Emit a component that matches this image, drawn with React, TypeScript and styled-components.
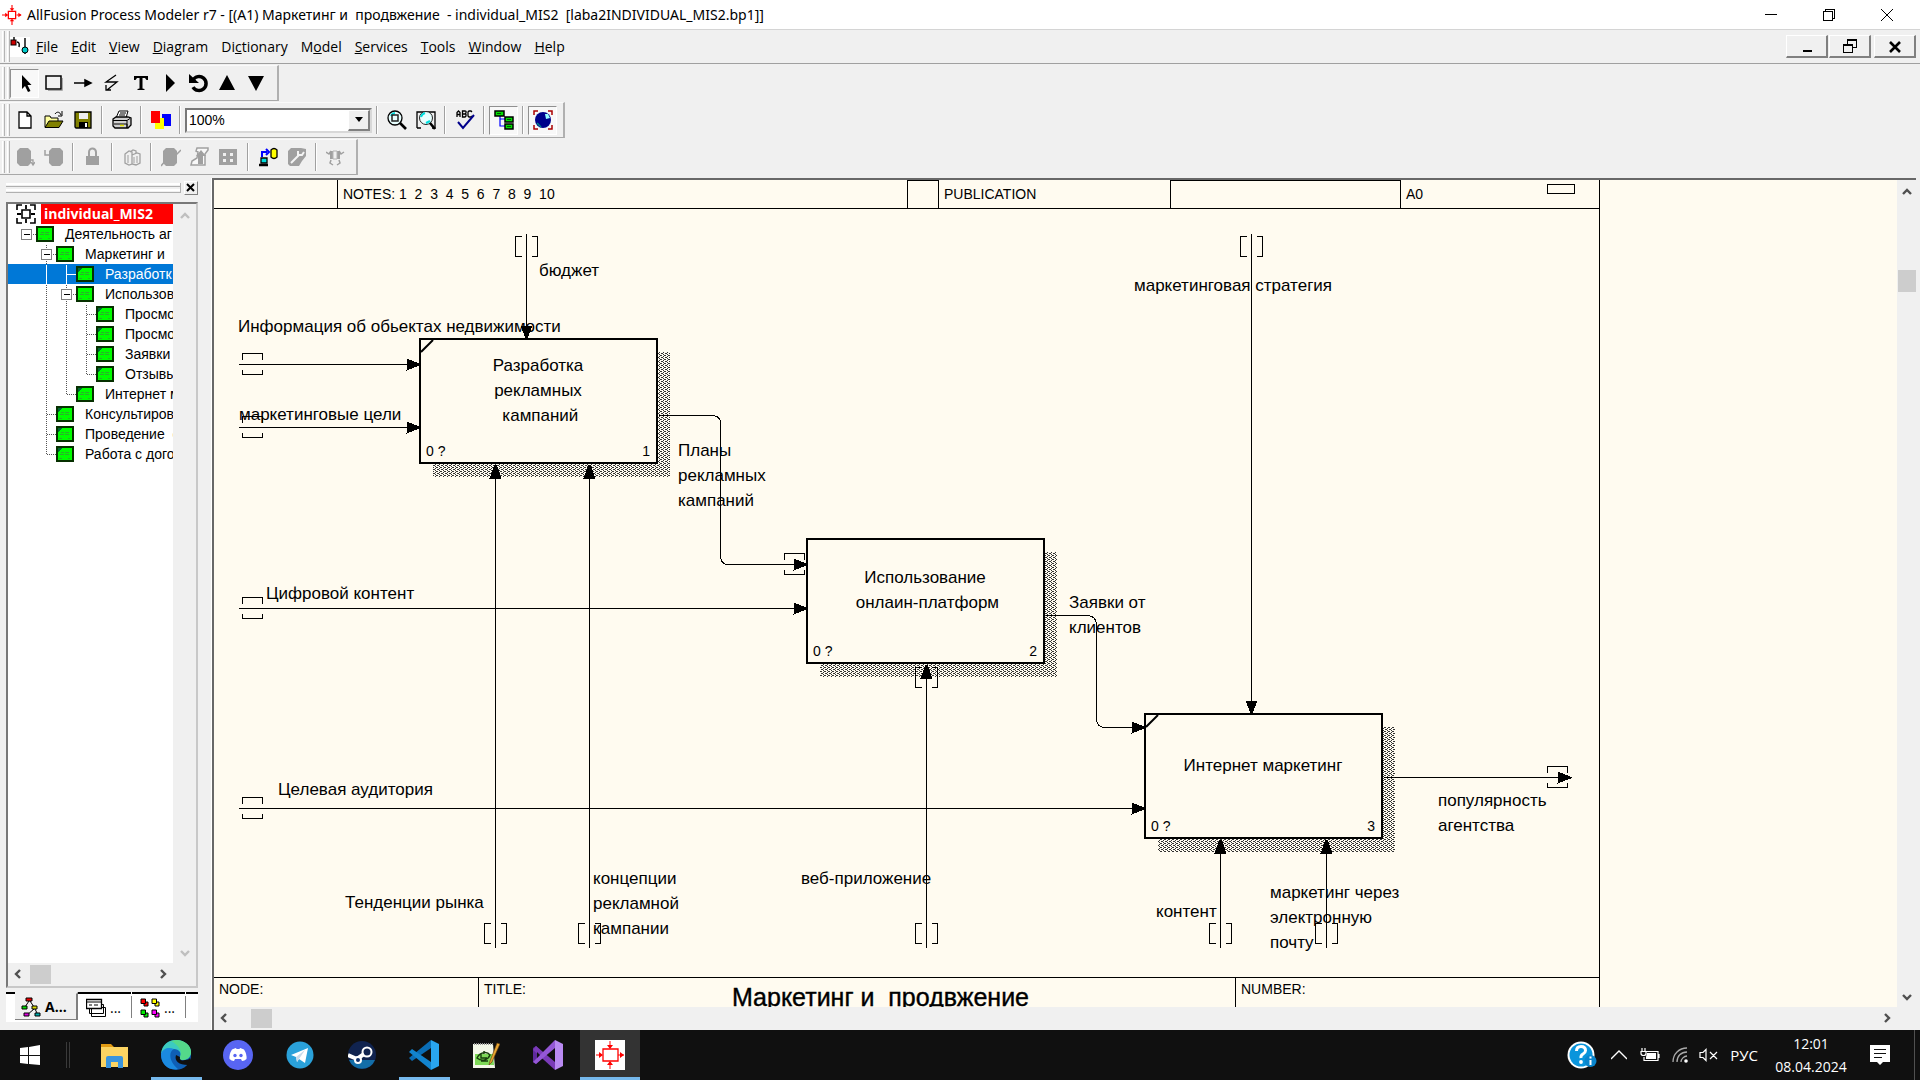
import React from "react";
import styled, { createGlobalStyle, css } from "styled-components";

const ui = `"Open Sans", "Noto Sans", sans-serif`;
const arial = `"Liberation Sans", Arial, sans-serif`;
const face = "#f0f0f0";
const paper = "#fffbf0";

const GlobalStyle = createGlobalStyle`
  *, *::before, *::after { box-sizing: border-box; }
  body { margin: 0; overflow: hidden; background: ${face}; color: #000; }
  button, select { font: inherit; color: inherit; margin: 0; padding: 0; border: 0; background: none; border-radius: 0; }
  svg { display: block; flex: none; }
`;

const Screen = styled.div`
  display: flex;
  flex-direction: column;
  height: 100vh;
  font: 14px/20px ${ui};
  background: ${face};
`;

/* ---------- title bar and menu ---------- */

const TitleBar = styled.header`
  display: flex;
  align-items: center;
  height: 29px;
  padding: 0 4px 0 2px;
  background: #fff;
`;

const Caption = styled.h1`
  flex: 1;
  margin: 0 0 0 5px;
  font: 400 14px/28px "Noto Sans", sans-serif;
  white-space: pre;
`;

const CaptionButton = styled.button`
  display: grid;
  place-items: center;
  width: 58px;
  height: 28px;
`;

const MenuBar = styled.nav`
  display: flex;
  align-items: center;
  height: 35px;
  padding: 0 4px 0 2px;
  border-top: 1px solid #d4d4d4;
  border-bottom: 1px solid #a0a0a0;
`;

const Grip = styled.span`
  flex: none;
  align-self: stretch;
  width: 8px;
  margin: 1px 0 1px;
  border: solid #b4b4b4;
  border-width: 0 1px 0 0;
  background: linear-gradient(90deg, #fff 0 1px, ${face} 1px 2px, #b4b4b4 2px 3px, ${face} 3px 5px, #fff 5px 6px, ${face} 6px);
`;

const MenuList = styled.div`
  display: flex;
  flex: 1;
  gap: 13px;
  margin-left: 6px;
`;

const MenuButton = styled.button`
  font: 14px/20px ${ui};
  white-space: nowrap;
`;

const MdiButton = styled.button<{ $gap?: boolean }>`
  display: grid;
  place-items: center;
  width: 42px;
  height: 23px;
  margin-left: ${(p) => (p.$gap ? 3 : 1)}px;
  border: solid;
  border-width: 1px 2px 2px 1px;
  border-color: #fff #808080 #808080 #fff;
`;

/* ---------- toolbars ---------- */

const Bars = styled.div`
  display: flex;
  flex-direction: column;
  align-items: flex-start;
  gap: 1px;
  padding-top: 1px;
`;

const Bar = styled.div`
  display: flex;
  align-items: center;
  height: 36px;
  padding: 0 6px 0 2px;
  border: solid;
  border-width: 1px 2px 1px 0;
  border-color: #fafafa #b0b0b0 #a8a8a8 #fafafa;
`;

const ToolButton = styled.button<{ $on?: boolean }>`
  display: grid;
  place-items: center;
  width: 29px;
  height: 29px;
  ${(p) =>
    p.$on &&
    css`
      background: #f8f8f8;
      border: 1px solid;
      border-color: #909090 #fff #fff #909090;
    `}
`;

const Divider = styled.span`
  flex: none;
  width: 2px;
  height: 28px;
  margin: 0 4px;
  border-left: 1px solid #a0a0a0;
  border-right: 1px solid #fff;
`;

const Combo = styled.label`
  display: grid;
  grid-template-columns: 1fr 22px;
  width: 187px;
  height: 25px;
  border: 2px solid;
  border-color: #787878 #d8d8d8 #d8d8d8 #787878;
  background: #fff;
`;

const ComboSelect = styled.select`
  grid-area: 1 / 1 / 2 / 3;
  appearance: none;
  width: 100%;
  padding-left: 2px;
  font: 14px/20px ${arial};
  outline: 0;
`;

const ComboArrow = styled.span`
  grid-area: 1 / 2;
  display: grid;
  place-items: center;
  pointer-events: none;
  background: ${face};
  border: solid;
  border-width: 1px 2px 2px 1px;
  border-color: #fff #808080 #808080 #fff;
`;

/* ---------- workspace ---------- */

const Workspace = styled.main`
  display: flex;
  flex: 1;
  min-height: 0;
  padding-top: 3px;
`;

const Explorer = styled.aside`
  display: flex;
  flex-direction: column;
  flex: none;
  width: 212px;
  padding: 2px 13px 8px 6px;
  border-right: 1px solid #fff;
  font: 14px/20px ${arial};
`;

const ExplorerHead = styled.div`
  display: flex;
  align-items: center;
  gap: 3px;
  height: 16px;
  margin-bottom: 6px;
`;

const Stripes = styled.span`
  flex: 1;
  height: 10px;
  border: solid #b0b0b0;
  border-width: 0 1px 1px 0;
  background: linear-gradient(#fff 0 2px, ${face} 2px 3px, #b0b0b0 3px 4px, ${face} 4px 6px, #fff 6px 8px, ${face} 8px);
`;

const CloseButton = styled.button`
  display: grid;
  place-items: center;
  width: 14px;
  height: 14px;
  border: 1px solid;
  border-color: #fff #808080 #808080 #fff;
`;

const TreeFrame = styled.div`
  display: grid;
  grid-template: 1fr 23px / 1fr 23px;
  flex: 1;
  min-height: 0;
  border: 2px solid;
  border-color: #787878 #c8c8c8 #c8c8c8 #787878;
`;

const TreeList = styled.ul`
  margin: 0;
  padding: 0;
  list-style: none;
  overflow: hidden;
  background: #fff;
`;

const TreeRow = styled.li<{ $selected?: boolean }>`
  display: flex;
  align-items: center;
  height: 20px;
  padding-left: 8px;
  white-space: pre;
  color: ${(p) => (p.$selected ? "#fff" : "#000")};
  background: ${(p) => (p.$selected ? "#0078d7" : "none")};
`;

const TreeName = styled.span`
  margin-left: 11px;
`;

const RootName = styled.strong`
  flex: 1;
  margin-left: 5px;
  padding-left: 3px;
  color: #fff;
  background: #f00;
  font: 700 14px/20px ${ui};
`;

const ScrollV = styled.div`
  display: flex;
  flex-direction: column;
  align-items: center;
  justify-content: space-between;
  padding: 6px 0 4px;
  background: ${face};
`;

const ScrollH = styled.div`
  display: flex;
  align-items: center;
  height: 22px;
  padding: 0 4px;
  background: ${face};
`;

const ScrollButton = styled.button`
  display: grid;
  place-items: center;
  width: 12px;
  height: 12px;
`;

const Thumb = styled.span<{ $v?: boolean; $offset: number }>`
  flex: none;
  width: ${(p) => (p.$v ? 18 : 21)}px;
  height: ${(p) => (p.$v ? 22 : 19)}px;
  margin: ${(p) => (p.$v ? `${p.$offset}px 0 auto` : `0 auto 0 ${p.$offset}px`)};
  background: #cdcdcd;
`;

const Tabs = styled.div`
  display: flex;
  height: 30px;
  margin-top: 4px;
  background: #fff;
`;

const Tab = styled.button<{ $active?: boolean }>`
  display: flex;
  align-items: center;
  gap: 4px;
  width: ${(p) => (p.$active ? 63 : 53)}px;
  padding-left: ${(p) => (p.$active ? 6 : 8)}px;
  border-top: 2px solid #000;
  font: ${(p) => (p.$active ? 700 : 400)} 14px/20px ${ui};
  ${(p) =>
    p.$active &&
    css`
      height: 28px;
      background: ${face};
      border-top-color: ${face};
      border-right: 2px solid #808080;
      border-bottom: 1px solid #808080;
    `}
`;

const TabLead = styled.span<{ $fill?: boolean }>`
  flex: ${(p) => (p.$fill ? 1 : "none")};
  width: 9px;
  border-top: 2px solid #000;
`;

const TabRule = styled.span`
  width: 1px;
  height: 22px;
  align-self: center;
  background: #808080;
`;

const Document = styled.section`
  display: grid;
  grid-template: 1fr 23px / 1fr 19px;
  flex: 1;
  min-width: 0;
  margin-right: 4px;
  border: solid #686868;
  border-width: 2px 0 0 2px;
`;

const Viewport = styled.div`
  overflow: hidden;
  background: ${paper};
  font: 17px/25px ${arial};
`;

const Sheet = styled.div`
  width: 1386px;
  border-right: 1px solid #000;
`;

const SheetRow = styled.div<{ $footer?: boolean }>`
  display: flex;
  height: ${(p) => (p.$footer ? 46 : 29)}px;
  border: solid #000;
  border-width: ${(p) => (p.$footer ? "1px 0 0" : "0 0 1px")};
  font: 14px/${(p) => (p.$footer ? 22 : 29)}px ${arial};
`;

const Cell = styled.div<{ $w?: number; $top?: boolean }>`
  display: flex;
  flex: ${(p) => (p.$w ? "none" : 1)};
  width: ${(p) => p.$w}px;
  padding-left: 5px;
  border-right: ${(p) => (p.$w ? "1px solid #000" : "0")};
  border-top: ${(p) => (p.$top ? "1px solid #000" : "0")};
  white-space: pre;
`;

const ContextBox = styled.span`
  width: 28px;
  height: 10px;
  margin: 4px 24px 0 auto;
  border: 1px solid #000;
`;

const SheetTitle = styled.h2`
  flex: 1;
  margin: 0;
  font: 400 25px/38px ${arial};
  text-align: center;
  -webkit-text-stroke: 0.4px #000;
`;

const Stage = styled.div`
  position: relative;
  height: 768px;
`;

const Lines = styled.svg`
  width: 100%;
  height: 100%;
`;

const Activity = styled.div`
  position: absolute;
  display: flex;
  flex-direction: column;
  width: 239px;
  height: 126px;
  padding: 0 6px 0 5px;
  border: 2px solid #000;
  background: ${paper};
`;

const Corner = styled.svg`
  position: absolute;
  top: 0;
  left: 0;
`;

const ActivityName = styled.div`
  display: grid;
  flex: 1;
  place-content: center;
  text-align: center;
  white-space: pre;
`;

const ActivityFoot = styled.div`
  display: flex;
  justify-content: space-between;
  font: 14px/22px ${arial};
`;

const ArrowLabel = styled.div`
  position: absolute;
  white-space: pre;
`;

/* ---------- taskbar ---------- */

const Taskbar = styled.footer`
  display: flex;
  align-items: stretch;
  flex: none;
  height: 50px;
  background: #101010;
  color: #fff;
`;

const TaskButton = styled.button<{ $state?: "running" | "active" }>`
  display: grid;
  place-items: center;
  width: 60px;
  margin-right: 2px;
  background-color: ${(p) => (p.$state === "active" ? "#333" : "transparent")};
  background-image: ${(p) => (p.$state ? "linear-gradient(#76b9ed, #76b9ed)" : "none")};
  background-repeat: no-repeat;
  background-position: bottom center;
  background-size: ${(p) => (p.$state === "active" ? "100% 3px" : "51px 3px")};
`;

const TaskSplit = styled.span`
  align-self: center;
  width: 4px;
  height: 26px;
  margin: 0 14px 0 4px;
  border: solid #3a3a3a;
  border-width: 0 1px;
`;

const Tray = styled.div`
  display: flex;
  align-items: center;
  margin: 0 5px 0 auto;
  padding-right: 12px;
  border-right: 1px solid #505050;
  font: 15px/22px ${ui};
`;

const TrayButton = styled.button<{ $w: number }>`
  display: grid;
  place-items: center;
  width: ${(p) => p.$w}px;
  height: 50px;
`;

const Clock = styled.time`
  width: 92px;
  font: 14px/23px ${ui};
  text-align: center;
`;

/* ---------- icons ---------- */

type Draw = { children: React.ReactNode; w?: number; h?: number; sharp?: boolean };
const Icon = ({ children, w = 20, h = 20, sharp }: Draw) => (
  <svg width={w} height={h} viewBox={`0 0 ${w} ${h}`} fill="none" aria-hidden="true" shapeRendering={sharp ? "crispEdges" : undefined}>
    {children}
  </svg>
);

const ModelerIcon = ({ size = 22 }: { size?: number }) => (
  <svg width={size} height={size} viewBox="0 0 22 22" aria-hidden="true" fill="none" stroke="#f00">
    <rect x="7" y="7" width="8" height="8" strokeWidth="1.4" />
    <path d="M11 0v5M11 22v-5M0 11h5M16 11h5" strokeWidth="1.2" />
    <path d="M11 7 8.5 3.5h5zM11 15l-2.5 3h5zM7 11 3.5 8.500v5zM21.500 11 18 8.500v5z" fill="#f00" stroke="none" />
  </svg>
);

const DocIcon = () => (
  <Icon w={20} h={22}>
    <path d="M0 1h20v20H0z" fill="#fff" />
    <path d="M4 1v3M7 6q3 0 2 5M15 2v16" stroke="#000" strokeWidth="1.4" />
    <rect x="1" y="4" width="5" height="5" fill="#c00" stroke="#000" />
    <circle cx="15" cy="14" r="3" fill="#0cc" stroke="#000" />
  </Icon>
);

const tools: [string, React.ReactNode][] = [
  ["Pointer", <path d="M7 2v14l3-3 3 6 2.500-1-3-6h4z" fill="#000" />],
  ["Activity box", <><path d="M2 3h15v13H2z" stroke="#000" strokeWidth="1.5" /><path d="M4 17.500h14.500V5" stroke="#aaa" /></>],
  ["Arrow", <path d="M1 10h12M12 7l6 3-6 3z" stroke="#000" strokeWidth="1.5" fill="#000" />],
  ["Squiggle", <path d="M14 2 4 9h11L5 17M4 12v5h5" stroke="#000" strokeWidth="1.300" />],
  ["Text", <path d="M3 3h14v4h-1.500L14 5h-2.500v10.500l2 .5v1H6.500v-1l2-.5V5H6L4.500 7H3z" fill="#000" />],
  ["Play", <path d="M6 1v18l9-9z" fill="#000" />],
  ["Go to sibling", <><path d="M4 7a7 7 0 1 1 0 7" stroke="#000" strokeWidth="3.500" /><path d="M0 1v9h10z" fill="#000" /></>],
  ["Go to parent", <path d="M9 2 17 17H1z" fill="#000" />],
  ["Go to child", <path d="M9 18 17 3H1z" fill="#000" />],
];

const NewIcon = () => <Icon><path d="M4 2h8l4 4v12H4zM12 2v4h4" fill="#fff" stroke="#000" strokeWidth="1.3" /></Icon>;
const OpenIcon = () => (
  <Icon>
    <path d="M1 17V6h5l1 2h7v3" fill="#ffffa0" stroke="#000" />
    <path d="M1 17.500 5 11h14l-4 6.500z" fill="#808000" stroke="#000" />
    <path d="M11 4c2-3 5-2 6 1M18 1v5h-4" stroke="#000" />
  </Icon>
);
const SaveIcon = () => (
  <Icon>
    <path d="M2 2h16v16H3l-1-1z" fill="#808000" stroke="#000" strokeWidth="1.3" />
    <path d="M6 3h9v6H6z" fill="#f0f0f0" />
    <path d="M6 12h9v6H6z" fill="#000" />
    <path d="M12 13h2v4h-2z" fill="#fff" />
  </Icon>
);
const PrintIcon = () => (
  <Icon>
    <path d="M7 1h9l-2 7H4z" fill="#fff" stroke="#000" />
    <path d="M8 3h6M7 5h6" stroke="#000" />
    <path d="M1 9l3-2h12l3 1v7l-3 3H3l-2-2z" fill="#d0d0d0" stroke="#000" strokeWidth="1.3" />
    <path d="M1 10.500h14l3-2M2 14h13v4M15 11v7" stroke="#000" />
    <path d="M8 15.500h4" stroke="#e0e000" strokeWidth="1.500" />
  </Icon>
);
const PaletteIcon = () => (
  <Icon w={22} sharp>
    <path d="M12 4h9v12h-9z" fill="#00f" />
    <path d="M5 8h9v11H5z" fill="#ff0" />
    <path d="M1 1h9v12H1z" fill="#f00" />
  </Icon>
);
const ZoomIcon = () => (
  <Icon>
    <circle cx="8" cy="8" r="7" fill="#e8ffff" stroke="#000" strokeWidth="1.300" />
    <path d="M4 6a5 5 0 0 1 4-3" stroke="#0dd" strokeWidth="2" />
    <path d="M5 5h6v6H5z" stroke="#222" strokeWidth="1.500" />
    <path d="m13 13 6 6" stroke="#000" strokeWidth="2.600" />
  </Icon>
);
const FitIcon = () => (
  <Icon>
    <path d="M1 18V2h18v16h-3M1 18h4" stroke="#000" strokeWidth="1.300" />
    <circle cx="10" cy="8" r="6.500" fill="#e8ffff" stroke="#222" />
    <path d="M5 7a6 6 0 0 1 4-4M10 13l4-2" stroke="#0dd" strokeWidth="2" />
    <path d="m14 13 5 6" stroke="#000" strokeWidth="2.600" />
  </Icon>
);
const SpellIcon = () => (
  <Icon>
    <path d="M2 7V2.500L3.500 1 5 2.500V7M2 4.500h3M7.500 1v6H10l1-1V4.500L10 4l1-1V1.500L10 1zM7.500 4H10M17 2l-1-1h-2l-1 1v4l1 1h2l1-1" stroke="#000" strokeWidth="1.300" />
    <path d="m3 12 5 6L19 5" stroke="#00008b" strokeWidth="2" />
  </Icon>
);
const ExplorerIcon = () => (
  <Icon>
    <path d="M6 6v10h5M6 9h5" stroke="#00f" strokeWidth="1.200" />
    <path d="M1 1h9v5H1zM11 7h8v5h-8zM11 14h8v5h-8z" fill="#0d0" stroke="#000" strokeWidth="1.500" />
    <path d="M3 3.500h4M13 9.500h4M13 16.500h4" stroke="#050" strokeWidth="1.200" />
  </Icon>
);
const GlobeIcon = () => (
  <Icon>
    <path d="M1 5V1h4M15 1h4v4M1 15v4h4M15 19h4v-4" stroke="#a00" strokeWidth="1.500" />
    <circle cx="10" cy="10" r="8" fill="#00008b" />
    <path d="M12 4h3l2 4-4 1z" fill="#9ff" />
    <path d="M4 13l4 4" stroke="#088" strokeWidth="1.500" />
  </Icon>
);

const Tank = <path d="M5 1h8l3 3v12l-3 3H5l-3-3V4z" fill="#a0a0a0" />;
const CheckOutIcon = () => <Icon>{Tank}<path d="M15 13h3v4M16 15l2 3 2-3" stroke="#a0a0a0" strokeWidth="1.300" /></Icon>;
const CheckInIcon = () => <Icon><path d="M8 1h8l3 3v12l-3 3H8l-3-3V4z" fill="#a0a0a0" /><path d="M1 3v5h4" stroke="#a0a0a0" strokeWidth="1.500" /></Icon>;
const LockIcon = () => <Icon><path d="M3 9h13v9H3z" fill="#a0a0a0" /><path d="M6 9V5a3 3 0 0 1 7 0v4" stroke="#a0a0a0" strokeWidth="2" /></Icon>;
const LibraryIcon = () => (
  <Icon>
    <path d="M3 7l4-3 3 1v12l-3 1-4-2zM8 5l3-2 3 1v2M10 8l5-2 3 1v9l-4 2-4-1z" stroke="#a0a0a0" strokeWidth="1.300" />
    <path d="M6 8v8M12 10v6M15 9v7" stroke="#a0a0a0" />
  </Icon>
);
const RollIcon = () => <Icon>{Tank}<path d="m0 19 5-6M15 8l5-5" stroke="#a0a0a0" strokeWidth="1.500" /></Icon>;
const MergeIcon = () => (
  <Icon>
    <path d="M7 1h11v2l-3 4v11H1l1-4 5-3 1-6-2-1z" fill="#f8f8f8" stroke="#a0a0a0" strokeWidth="1.500" />
    <path d="m11 3 5 6h-3v8H8V9H6z" fill="#a0a0a0" />
  </Icon>
);
const GridIcon = () => <Icon sharp><path d="M0 2h18v16H0z" fill="#a0a0a0" /><path d="M4 6h3v3H4zM11 6h3v3h-3zM4 12h3v3H4zM11 12h3v3h-3z" fill="#f0f0f0" /></Icon>;
const TransferIcon = () => (
  <Icon>
    <path d="M4 10V5h5M8 2l3 3-3 3" stroke="#00f" strokeWidth="2" />
    <path d="M13 3c2-2 4-2 6 0v7c-2 2-4 2-6 0z" fill="#ff0" stroke="#000" strokeWidth="1.300" />
    <path d="M3 11h6v5H3z" fill="#0dd" stroke="#000" strokeWidth="1.300" />
    <path d="M1 18h9" stroke="#000" strokeWidth="2.500" />
  </Icon>
);
const WrenchIcon = () => (
  <Icon>
    <path d="M4 1h10l5 1v7l-4 5-3 5H3l-2-2V4z" fill="#a0a0a0" />
    <path d="m4 16 8-8M11 4v4h4l2-3" stroke="#f4f4f4" strokeWidth="2" />
  </Icon>
);
const UsersIcon = () => (
  <Icon>
    <path d="M0 5l3 2 2-3M18 5l-3 2-2-3M5 13l-1 3 3 2M13 13l1 3-3 2" stroke="#a0a0a0" strokeWidth="1.500" />
    <path d="M4 4h3v8H4zM11 4h3v8h-3z" fill="#a0a0a0" />
    <path d="M7 4h4v8H7z" stroke="#b4b4b4" />
  </Icon>
);

const Chevron = ({ to, faint }: { to: "up" | "down" | "left" | "right"; faint?: boolean }) => {
  const d = { up: "M2 8l4-4 4 4", down: "M2 4l4 4 4-4", left: "M8 2 4 6l4 4", right: "M4 2l4 4-4 4" }[to];
  return <Icon w={12} h={12}><path d={d} stroke={faint ? "#bfbfbf" : "#505050"} strokeWidth="2.400" /></Icon>;
};

/* ---------- model tree ---------- */

type Guide = " " | "|" | "t" | "l" | "-";
const tree: { guides: Guide[]; name: string; leaf?: boolean; selected?: boolean }[] = [
  { guides: ["-"], name: "Деятельность аг" },
  { guides: [" ", "-"], name: "Маркетинг и" },
  { guides: [" ", "|", "t"], name: "Разработк", leaf: true, selected: true },
  { guides: [" ", "|", "-"], name: "Использов" },
  { guides: [" ", "|", "|", "t"], name: "Просмо", leaf: true },
  { guides: [" ", "|", "|", "t"], name: "Просмо", leaf: true },
  { guides: [" ", "|", "|", "t"], name: "Заявки", leaf: true },
  { guides: [" ", "|", "|", "l"], name: "Отзывы", leaf: true },
  { guides: [" ", "|", "l"], name: "Интернет м", leaf: true },
  { guides: [" ", "t"], name: "Консультиров", leaf: true },
  { guides: [" ", "t"], name: "Проведение  с", leaf: true },
  { guides: [" ", "l"], name: "Работа с дого", leaf: true },
];

const guidePath: Record<Guide, string> = {
  " ": "",
  "|": "M10 0v20",
  t: "M10 0v20M10 10h10",
  l: "M10 0v10h10",
  "-": "M10 0v20M10 10h10",
};

const GuideCell = ({ kind, first, solid }: { kind: Guide; first?: boolean; solid?: boolean }) => (
  <Icon sharp>
    <path
      d={first ? "M10 10h10" : guidePath[kind]}
      transform="translate(.5 .5)"
      stroke={solid ? "#fff" : "#555"}
      strokeDasharray={solid ? undefined : "1 1"}
    />
    {kind === "-" && <path d="M5.500 5.500h10v10h-10z" fill="#fff" stroke="#808080" />}
    {kind === "-" && <path d="M8 10.500h6" stroke="#000" />}
  </Icon>
);

const NodeIcon = ({ leaf }: { leaf?: boolean }) => (
  <Icon w={18} h={16} sharp>
    <path d="M1 1h16v14H1z" fill="#0f0" stroke="#063000" strokeWidth="2" />
    {leaf && <path d="M2 6V2h4z" fill="#063" />}
    <path d="M5 6h3m1 0h4M4 8h4m1 0h4M3 12h3m6 0h2" stroke="#2bb02b" />
  </Icon>
);

const RootIcon = () => (
  <Icon w={20} h={20}>
    <path d="M1 6V1h5M14 1h5v5M1 14v5h5M14 19h5v-5" stroke="#000" strokeWidth="1.600" />
    <path d="M6 6h8v8H6z" stroke="#000" strokeWidth="1.600" />
    <path d="M10 1v4M10 15v4M1 10h4M15 10h4" stroke="#000" strokeWidth="1.800" />
  </Icon>
);

const ListTabIcon = () => (
  <Icon>
    <path d="M8 4 4 10M9 4l4 6M13 12l-7 6M14 12l3 6" stroke="#000" />
    <g stroke="#000"><path d="M5 1h6v3H5z" fill="#e00" /><path d="M1 9h5v3H1z" fill="#0d0" /><path d="M11 9h5v3h-5z" fill="#dd0" /><path d="M3 16h5v3H3z" fill="#d0d" /><path d="M14 16h5v3h-5z" fill="#0aa" /></g>
  </Icon>
);
const CardsTabIcon = () => (
  <Icon>
    <path d="M5.500 9.500h14v9h-14zM3.500 6.500h14v9h-14z" fill="#fff" stroke="#000" />
    <path d="M.5 1.500h15v9H.5z" fill="#fff" stroke="#000" strokeWidth="1.300" />
    <path d="M1 4h14M3 7h3m2 0h4" stroke="#000" />
  </Icon>
);
const ObjectsTabIcon = () => (
  <Icon>
    {[["#f00", 1, 1], ["#ff0", 12, 1], ["#0e0", 1, 12], ["#f0f", 12, 12]].map(([c, x, y]) => (
      <g key={String(c)} transform={`translate(${x} ${y})`} stroke="#000" fill={String(c)}>
        <path d="M3 3h4v4H3z" />
        <path d="M0 0h4.500v4.500H0z" />
      </g>
    ))}
  </Icon>
);

/* ---------- diagram ---------- */

const activities = [
  { x: 205, y: 129, n: 1, leaf: true, name: "Разработка\nрекламных\n кампаний" },
  { x: 592, y: 329, n: 2, leaf: false, name: "Использование\n онлаин-платформ" },
  { x: 930, y: 504, n: 3, leaf: true, name: "Интернет маркетинг" },
];

const labels: [number, number, string][] = [
  [325, 49, "бюджет"],
  [920, 64, "маркетинговая стратегия"],
  [24, 105, "Информация об обьектах недвижимости"],
  [25, 193, "маркетинговые цели"],
  [464, 229, "Планы\nрекламных\nкампаний"],
  [52, 372, "Цифровой контент"],
  [855, 381, "Заявки от\nклиентов"],
  [64, 568, "Целевая аудитория"],
  [1224, 579, "популярность\nагентства"],
  [131, 681, "Тенденции рынка"],
  [379, 657, "концепции\nрекламной\nкампании"],
  [587, 657, "веб-приложение"],
  [942, 690, "контент"],
  [1056, 671, "маркетинг через\nэлектронную\nпочту"],
];

const wires = [
  "M312 24V129", "M1037 24V504",
  "M24 155H205", "M24 218H205", "M24 399H592", "M24 599H930",
  "M444 206H499Q506 207 506 214V348Q507 355 514 355H592",
  "M831 406H874Q881 407 882 414V511Q883 517 889 518H930",
  "M1169 568H1357",
  "M281 738V255", "M375 738V255", "M712 738V455", "M1006 738V630", "M1112 738V630",
];
const headsRight = [[205, 155], [205, 218], [592, 355], [592, 399], [930, 518], [930, 599], [1356, 568]];
const headsDown = [[312, 129], [1037, 504]];
const headsUp = [[281, 255], [375, 255], [712, 455], [1006, 630], [1112, 630]];
const tunnelsH = [[38, 155], [38, 218], [38, 399], [38, 599], [580, 355], [1343, 568]];
const tunnelsV = [[312, 37], [1037, 37], [281, 724], [375, 724], [712, 724], [1006, 724], [1112, 724], [712, 468]];

const Diagram = () => (
  <Stage>
    <Lines aria-hidden="true" fill="none" shapeRendering="crispEdges">
      <defs>
        <pattern id="hatch" width="4" height="4" patternUnits="userSpaceOnUse">
          <path d="M0 0h1v1H0zM1 1h1v1H1zM2 2h1v1H2zM1 3h1v1H1zM3 0h1v1H3zM3 2h1v1H3z" fill="#333" />
        </pattern>
      </defs>
      {activities.map((a) => (
        <rect key={a.n} x={a.x + 14} y={a.y + 14} width="237" height="125" fill="url(#hatch)" />
      ))}
      <g transform="translate(.5 .5)" stroke="#000">
        {wires.map((d) => <path key={d} d={d} />)}
        {tunnelsH.map(([x, y]) => (
          <path key={`${x} ${y}`} d={`M${x - 10} ${y - 5}v-6h20v6M${x - 10} ${y + 5}v5h20v-5`} />
        ))}
        {tunnelsV.map(([x, y]) => (
          <path key={`${x} ${y}`} d={`M${x - 5} ${y - 10}h-6v20h6M${x + 5} ${y - 10}h6v20h-6`} />
        ))}
      </g>
      <g fill="#000" transform="translate(.5 .5)">
        {headsRight.map(([x, y]) => <path key={`${x} ${y}`} d={`M${x} ${y - 1}v2l-13 5v-12z`} />)}
        {headsDown.map(([x, y]) => <path key={x} d={`M${x - 1} ${y}h2l5-13h-12z`} />)}
        {headsUp.map(([x, y]) => <path key={x} d={`M${x - 1} ${y}h2l5 14h-12z`} />)}
      </g>
    </Lines>
    {activities.map((a) => (
      <Activity key={a.n} style={{ left: a.x, top: a.y }}>
        {a.leaf && (
          <Corner width="14" height="14" aria-hidden="true"><path d="M0 12 12 0" stroke="#000" strokeWidth="2" /></Corner>
        )}
        <ActivityName>{a.name}</ActivityName>
        <ActivityFoot><span>0 ?</span><span>{a.n}</span></ActivityFoot>
      </Activity>
    ))}
    {labels.map(([left, top, text]) => (
      <ArrowLabel key={text} style={{ left, top }}>{text}</ArrowLabel>
    ))}
  </Stage>
);

/* ---------- taskbar icons ---------- */

const StartIcon = () => <Icon><path d="M0 3l8-1v8H0zM9 2l11-2v10H9zM0 11h8v8l-8-1zM9 11h11v9L9 19z" fill="#fff" /></Icon>;
const FolderIcon = () => (
  <Icon w={28} h={28}>
    <path d="M1 3h10l3 3h12v5H1z" fill="#e29b13" />
    <path d="M1 6h27v20H1z" fill="#fcd462" />
    <path d="M6 27V17q0-2 2-2h13q2 0 2 2v10h-5v-6h-7v6z" fill="#3a94dc" />
  </Icon>
);
const EdgeIcon = () => (
  <Icon w={30} h={30}>
    <circle cx="15" cy="15" r="15" fill="#0f5fb5" />
    <path d="M0 14C1 4 8 0 15 0c9 0 15 6 15 12 0 5-4 8-8 8-3 0-4-1-3-3 2-4-1-8-6-8-6 0-11 2-13 5z" fill="#3ccbc0" />
    <path d="M15 0c9 0 15 6 15 12 0 5-4 8-8 8-3 0-4-1-3-3 3-6-2-12-9-16z" fill="#54d98a" />
    <path d="M0 14C2 8 8 7 13 9c-5 2-6 12 4 20C7 31 0 24 0 14z" fill="#1b8ae0" />
    <path d="M19 17c-1 3 2 4 5 3 3 0 4-1 5-2l1 4-3 3c-9 0-14-4-12-10z" fill="#101010" />
  </Icon>
);
const DiscordIcon = () => (
  <Icon w={30} h={30}>
    <circle cx="15" cy="15" r="15" fill="#5865f2" />
    <path d="M9 9.500q3-1.500 4-1.500l.5 1h3l.5-1q1 0 4 1.500Q24 14 23.500 19q-2 2-4.500 2l-1-2h-6l-1 2q-2.500 0-4.500-2Q6 14 9 9.500z" fill="#fff" />
    <circle cx="12" cy="15.500" r="1.700" fill="#5865f2" /><circle cx="18" cy="15.500" r="1.700" fill="#5865f2" />
  </Icon>
);
const TelegramIcon = () => (
  <Icon w={28} h={28}>
    <circle cx="14" cy="14" r="13.500" fill="#2aa1da" />
    <path d="M5 14 22 7l-3 15-6-4-2 3-1-5z" fill="#fff" /><path d="m10 16 9-7-6 9-2 3z" fill="#c8daea" />
  </Icon>
);
const SteamIcon = () => (
  <Icon w={28} h={28}>
    <circle cx="14" cy="14" r="14" fill="#10234f" />
    <path d="M1 19a14 14 0 0 0 26 0z" fill="#136ea8" />
    <circle cx="19" cy="11" r="4.500" stroke="#fff" strokeWidth="2" /><path d="m0 14 9 4 7-5" stroke="#fff" strokeWidth="4" />
    <circle cx="10" cy="19" r="4" fill="#fff" /><circle cx="10" cy="19" r="2" fill="#10306a" />
  </Icon>
);
const CodeIcon = () => (
  <Icon w={30} h={30}>
    <path d="M22 0v8L3 21l-3-3z" fill="#0a6db5" />
    <path d="M22 30v-8L3 9l-3 3z" fill="#1284cf" />
    <path d="m22 0 8 4v22l-8 4z" fill="#29a5f0" />
  </Icon>
);
const NotepadIcon = () => (
  <Icon w={28} h={28}>
    <path d="M1 3h20l2 24H1z" fill="#f4f8e8" /><path d="M3 13h18l1 11H3z" fill="#7ed957" />
    <path d="M2 3h19" stroke="#999" strokeWidth="2" strokeDasharray="1 1" />
    <path d="M5 17c3-6 10-7 13-3-2 5-8 7-13 3zM9 13v4h6M9 20h7M12 10v3" stroke="#173d0c" strokeWidth="1.400" />
    <path d="m18 20 7-18 3 1-8 18-3 3z" fill="#e8a531" stroke="#5c3b10" strokeWidth=".6" />
  </Icon>
);
const StudioIcon = () => (
  <Icon w={30} h={30}>
    <path d="M0 8v14l3 2 4-4V10L3 6z" fill="#5f2a9c" />
    <path d="m3 6 19 16v8L0 10z" fill="#7a3bb8" />
    <path d="M22 0v8L3 24l-3-2z" fill="#9457d6" />
    <path d="M4 12v6l3-3z" fill="#101010" />
    <path d="m22 0 8 4v22l-8 4z" fill="#b98af2" />
  </Icon>
);
const ActiveModeler = () => (
  <svg width="30" height="30" viewBox="0 0 30 30" aria-hidden="true" fill="none">
    <path d="M0 0h30v30H0z" fill="#fff" /><path d="M8 9h15v12H8z" stroke="#f00" strokeWidth="1.300" />
    <path d="M15 1v7M15 29v-7M1 15h6M23 15h6" stroke="#f00" />
    <path d="m15 9-3-4h6zM15 21l-3 4h6zM8 15l-4-3v6zM29 15l-4-3v6z" fill="#f00" />
  </svg>
);

const tasks: [string, React.ReactNode, ("running" | "active")?][] = [
  ["Проводник", <FolderIcon />],
  ["Edge", <EdgeIcon />, "running"],
  ["Discord", <DiscordIcon />],
  ["Telegram", <TelegramIcon />],
  ["Steam", <SteamIcon />],
  ["Visual Studio Code", <CodeIcon />, "running"],
  ["Notepad++", <NotepadIcon />],
  ["Visual Studio", <StudioIcon />],
  ["AllFusion Process Modeler", <ActiveModeler />, "active"],
];

const menus: [string, string, string][] = [
  ["", "F", "ile"], ["", "E", "dit"], ["", "V", "iew"], ["", "D", "iagram"], ["Di", "c", "tionary"],
  ["M", "o", "del"], ["", "S", "ervices"], ["", "T", "ools"], ["", "W", "indow"], ["", "H", "elp"],
];

const Tool = ({ name, on, children }: { name: string; on?: boolean; children: React.ReactNode }) => (
  <ToolButton type="button" aria-label={name} aria-pressed={on} $on={on}>{children}</ToolButton>
);

export default function App() {
  return (
    <Screen>
      <GlobalStyle />
      <TitleBar>
        <ModelerIcon size={20} />
        <Caption>AllFusion Process Modeler r7 - [(A1) Маркетинг и  продвжение  - individual_MIS2  [laba2INDIVIDUAL_MIS2.bp1]]</Caption>
        <CaptionButton type="button" aria-label="Minimize"><Icon w={12} h={12} sharp><path d="M0 5.500h12" stroke="#000" /></Icon></CaptionButton>
        <CaptionButton type="button" aria-label="Restore"><Icon w={12} h={12} sharp><path d="M.5 2.500h9v9h-9zM2.500 2.500v-2h9v9h-2" stroke="#000" /></Icon></CaptionButton>
        <CaptionButton type="button" aria-label="Close"><Icon w={12} h={12}><path d="m0 0 12 12M12 0 0 12" stroke="#000" /></Icon></CaptionButton>
      </TitleBar>
      <MenuBar aria-label="Main menu">
        <Grip />
        <DocIcon />
        <MenuList>
          {menus.map(([a, key, b]) => (
            <MenuButton type="button" key={key}>{a}<u>{key}</u>{b}</MenuButton>
          ))}
        </MenuList>
        <MdiButton type="button" aria-label="Minimize diagram"><Icon w={16} h={16} sharp><path d="M4 13h9" stroke="#000" strokeWidth="2" /></Icon></MdiButton>
        <MdiButton type="button" aria-label="Restore diagram"><Icon w={16} h={16} sharp><path d="M1.500 6.500h9v8h-9zM5 6V1.500h9v8h-3" stroke="#000" /><path d="M5 2h10M1 7h10" stroke="#000" strokeWidth="2" /></Icon></MdiButton>
        <MdiButton type="button" $gap aria-label="Close diagram"><Icon w={16} h={16}><path d="m3 4 10 10M13 4 3 14" stroke="#000" strokeWidth="2.600" /></Icon></MdiButton>
      </MenuBar>

      <Bars>
        <Bar>
          <Grip />
          {tools.map(([name, shape], i) => (
            <Tool key={name} name={name} on={i === 0}><Icon>{shape}</Icon></Tool>
          ))}
        </Bar>
        <Bar>
          <Grip />
          <Tool name="New"><NewIcon /></Tool>
          <Tool name="Open"><OpenIcon /></Tool>
          <Tool name="Save"><SaveIcon /></Tool>
          <Divider />
          <Tool name="Print"><PrintIcon /></Tool>
          <Divider />
          <Tool name="Colors"><PaletteIcon /></Tool>
          <Divider />
          <Combo>
            <ComboSelect aria-label="Zoom" defaultValue="100%"><option>100%</option><option>200%</option></ComboSelect>
            <ComboArrow><Icon w={10} h={6}><path d="M1 0h8L5 5z" fill="#000" /></Icon></ComboArrow>
          </Combo>
          <Divider />
          <Tool name="Zoom in"><ZoomIcon /></Tool>
          <Tool name="Fit to window"><FitIcon /></Tool>
          <Divider />
          <Tool name="Spelling"><SpellIcon /></Tool>
          <Divider />
          <Tool name="Model explorer" on><ExplorerIcon /></Tool>
          <Divider />
          <Tool name="Model mart" on><GlobeIcon /></Tool>
        </Bar>
        <Bar>
          <Grip />
          <Tool name="Check out"><CheckOutIcon /></Tool>
          <Tool name="Check in"><CheckInIcon /></Tool>
          <Divider />
          <Tool name="Lock"><LockIcon /></Tool>
          <Divider />
          <Tool name="Library"><LibraryIcon /></Tool>
          <Divider />
          <Tool name="Rollback"><RollIcon /></Tool>
          <Tool name="Merge"><MergeIcon /></Tool>
          <Tool name="Versions"><GridIcon /></Tool>
          <Divider />
          <Tool name="Transfer"><TransferIcon /></Tool>
          <Tool name="Session"><WrenchIcon /></Tool>
          <Divider />
          <Tool name="Users"><UsersIcon /></Tool>
        </Bar>
      </Bars>

      <Workspace>
        <Explorer>
          <ExplorerHead>
            <Stripes />
            <CloseButton type="button" aria-label="Close explorer"><Icon w={10} h={10}><path d="m1 1 7 7M8 1 1 8" stroke="#000" strokeWidth="2" /></Icon></CloseButton>
          </ExplorerHead>
          <TreeFrame>
            <TreeList>
              <TreeRow><RootIcon /><RootName>individual_MIS2</RootName></TreeRow>
              {tree.map((row, i) => (
                <TreeRow key={i} $selected={row.selected}>
                  {row.guides.map((g, j) => <GuideCell key={j} kind={g} first={i === 0} solid={row.selected} />)}
                  <NodeIcon leaf={row.leaf} />
                  <TreeName>{row.name}</TreeName>
                </TreeRow>
              ))}
            </TreeList>
            <ScrollV>
              <ScrollButton type="button" aria-label="Scroll up"><Chevron to="up" faint /></ScrollButton>
              <ScrollButton type="button" aria-label="Scroll down"><Chevron to="down" faint /></ScrollButton>
            </ScrollV>
            <ScrollH>
              <ScrollButton type="button" aria-label="Scroll left"><Chevron to="left" /></ScrollButton>
              <Thumb $offset={6} />
              <ScrollButton type="button" aria-label="Scroll right"><Chevron to="right" /></ScrollButton>
            </ScrollH>
          </TreeFrame>
          <Tabs>
            <TabLead />
            <Tab type="button" $active><ListTabIcon />A...</Tab>
            <Tab type="button"><CardsTabIcon />...</Tab>
            <TabRule />
            <Tab type="button"><ObjectsTabIcon />...</Tab>
            <TabRule />
            <TabLead $fill />
          </Tabs>
        </Explorer>

        <Document>
          <Viewport>
            <Sheet>
              <SheetRow>
                <Cell $w={124} />
                <Cell $w={570}>NOTES: 1  2  3  4  5  6  7  8  9  10</Cell>
                <Cell $w={31} $top />
                <Cell $w={232}>PUBLICATION</Cell>
                <Cell $w={230} $top />
                <Cell>A0<ContextBox /></Cell>
              </SheetRow>
              <Diagram />
              <SheetRow $footer>
                <Cell $w={265}>NODE:</Cell>
                <Cell $w={757}>TITLE:<SheetTitle>Маркетинг и  продвжение</SheetTitle></Cell>
                <Cell>NUMBER:</Cell>
              </SheetRow>
            </Sheet>
          </Viewport>
          <ScrollV>
            <ScrollButton type="button" aria-label="Scroll up"><Chevron to="up" /></ScrollButton>
            <Thumb $v $offset={72} />
            <ScrollButton type="button" aria-label="Scroll down"><Chevron to="down" /></ScrollButton>
          </ScrollV>
          <ScrollH>
            <ScrollButton type="button" aria-label="Scroll left"><Chevron to="left" /></ScrollButton>
            <Thumb $offset={21} />
            <ScrollButton type="button" aria-label="Scroll right"><Chevron to="right" /></ScrollButton>
          </ScrollH>
        </Document>
      </Workspace>

      <Taskbar>
        <TaskButton type="button" aria-label="Пуск"><StartIcon /></TaskButton>
        <TaskSplit />
        {tasks.map(([name, icon, state]) => (
          <TaskButton type="button" key={name} aria-label={name} $state={state}>{icon}</TaskButton>
        ))}
        <Tray>
          <TrayButton type="button" $w={44} aria-label="Справка">
            <Icon w={30} h={28}>
              <circle cx="14" cy="14" r="13.500" fill="#fff" /><circle cx="14" cy="14" r="11.500" fill="#0a95dc" />
              <path d="M9.500 10q0-4.500 4.500-4.500t4.500 4q0 2-2.500 3.500t-2 4" stroke="#fff" strokeWidth="3" /><circle cx="14" cy="21" r="1.900" fill="#fff" />
              <circle cx="23.500" cy="20" r="6" fill="#0a85cc" /><path d="M23.500 19v5M23.500 15.500v2" stroke="#fff" strokeWidth="2" />
            </Icon>
          </TrayButton>
          <TrayButton type="button" $w={29} aria-label="Скрытые значки"><Icon w={16} h={10}><path d="m0 9 8-8 8 8" stroke="#fff" strokeWidth="1.300" /></Icon></TrayButton>
          <TrayButton type="button" $w={33} aria-label="Батарея">
            <Icon w={20} h={14}><path d="M5 3.500h13v9H4V9M19 6v4M1 3.500h5v2q0 2-2.500 2T1 5.500zM2 3V0M5 3V0" stroke="#fff" strokeWidth="1.200" /><path d="M7 5h9v6H6V9z" fill="#fff" /></Icon>
          </TrayButton>
          <TrayButton type="button" $w={28} aria-label="Сеть">
            <Icon w={16} h={16}><path d="M1 15C1 7 7 1 15 1M5 15c0-6 4-10 10-10M9 15c0-3 3-6 6-6" stroke="#aaa" strokeWidth="1.300" /><circle cx="14" cy="14" r="1.800" fill="#fff" /></Icon>
          </TrayButton>
          <TrayButton type="button" $w={29} aria-label="Звук">
            <Icon w={20} h={14}><path d="M1 4.500h3l3-3v11l-3-3H1zM11 4l7 7M18 4l-7 7" stroke="#fff" strokeWidth="1.200" /></Icon>
          </TrayButton>
          <TrayButton type="button" $w={42}>РУС</TrayButton>
          <Clock>12:01<br />08.04.2024</Clock>
          <TrayButton type="button" $w={45} aria-label="Уведомления">
            <Icon w={20} h={20}><path d="M0 0h20v17h-7l-3 3-3-3H0z" fill="#fff" /><path d="M4 4.500h12M4 8.500h12M4 12.500h8" stroke="#101010" strokeWidth="1.200" /></Icon>
          </TrayButton>
        </Tray>
      </Taskbar>
    </Screen>
  );
}
